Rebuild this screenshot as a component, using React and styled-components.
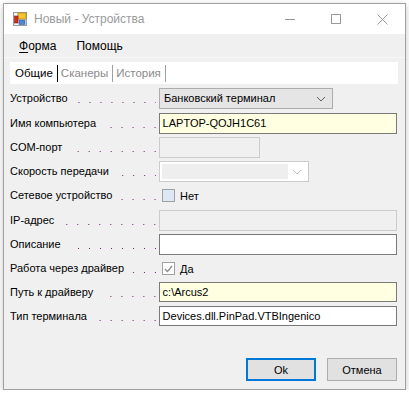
import React from 'react';
import styled, { createGlobalStyle } from 'styled-components';

const GlobalStyle = createGlobalStyle`
  body {
    margin: 0;
    background: #ffffff;
    font-family: "Liberation Sans", Arial, sans-serif;
  }
`;

const Window = styled.div`
  margin: 3px 0 0 3px;
  width: 401px;
  height: 385px;
  border: 1px solid #a0a0a0;
  background: #f0f0f0;
  box-shadow: 0 2px 7px rgba(0, 0, 0, 0.22);
  display: flex;
  flex-direction: column;
`;

const TitleBar = styled.div`
  height: 30px;
  background: #ffffff;
  display: flex;
  align-items: center;
  padding-left: 9px;
`;

const Title = styled.span`
  margin-left: 7px;
  font-size: 12px;
  color: #9a9a9a;
  flex: 1;
`;

const WinButton = styled.div`
  width: 46px;
  height: 30px;
  display: flex;
  align-items: center;
  justify-content: center;
`;

const MenuBar = styled.div`
  height: 23px;
  display: flex;
  align-items: center;
  padding-left: 11px;
  gap: 12px;
  border-bottom: 1px solid #f8f8f8;
`;

const MenuItem = styled.span`
  font-size: 12px;
  color: #000;
  padding: 0 4px;
  u { text-decoration-thickness: 1px; text-underline-offset: 2px; }
`;

const TabStrip = styled.div`
  margin: 4px 7px 0 6px;
  height: 22px;
  background: #ffffff;
  display: flex;
  align-items: center;
  padding-left: 2px;
`;

const Tab = styled.span`
  font-size: 11.5px;
  padding: 0 4px 0 3px;
  line-height: 17px;
  color: ${p => (p.active ? '#000' : '#8a8a8a')};
  border-right: 1px solid ${p => (p.active ? '#000' : '#a0a0a0')};
`;

const Form = styled.div`
  display: flex;
  flex-direction: column;
  padding: 4px 8px 0 6px;
`;

const Row = styled.div`
  display: flex;
  align-items: flex-start;
  height: ${p => p.h || 24}px;
`;

const Label = styled.div`
  width: 149px;
  display: flex;
  align-items: baseline;
  line-height: 21px;
  font-size: 11px;
  color: #000;
`;

const Dots = styled.span`
  flex: 1;
  align-self: stretch;
  margin-left: 8px;
  margin-right: 3px;
  background-image: linear-gradient(to left, #7a1a7a 1px, transparent 1px);
  background-size: 11px 1px;
  background-repeat: repeat-x;
  background-position: right 0 bottom 6px;
`;

const TextBox = styled.div`
  box-sizing: border-box;
  width: ${p => p.w || 239}px;
  height: ${p => p.hgt || 21}px;
  border: 1px solid ${p => (p.disabled ? '#cccccc' : '#7a7a7a')};
  background: ${p => (p.disabled ? '#f0f0f0' : p.yellow ? '#ffffe1' : '#ffffff')};
  font-size: 11px;
  line-height: 19px;
  padding-left: 3px;
  color: #000;
  white-space: nowrap;
`;

const Combo = styled.div`
  box-sizing: border-box;
  width: ${p => p.w}px;
  height: 21px;
  border: 1px solid ${p => (p.disabled ? '#cccccc' : '#adadad')};
  background: ${p => (p.disabled ? '#ffffff' : '#e5e5e5')};
  display: flex;
  align-items: center;
  padding: 2px;
  font-size: 11px;
  color: #000;
`;

const ComboText = styled.div`
  flex: 1;
  align-self: stretch;
  line-height: 15px;
  padding-left: 2px;
  background: ${p => (p.disabled ? '#eeeeee' : 'transparent')};
`;

const Chevron = styled.div`
  width: 18px;
  display: flex;
  justify-content: center;
`;

const CheckRow = styled.div`
  display: flex;
  align-items: center;
  height: 21px;
  padding-left: 3px;
  font-size: 11px;
  gap: 5px;
`;

const CheckBox = styled.div`
  box-sizing: border-box;
  width: 13px;
  height: 13px;
  border: 1px solid #a0a0a0;
  background: ${p => (p.hot ? '#dde8f7' : '#ffffff')};
  display: flex;
  align-items: center;
  justify-content: center;
`;

const Footer = styled.div`
  margin-top: auto;
  display: flex;
  justify-content: flex-end;
  gap: 11px;
  padding: 0 8px 8px 0;
`;

const Button = styled.div`
  box-sizing: border-box;
  width: 70px;
  height: 23px;
  border: ${p => (p.primary ? '2px solid #0078d7' : '1px solid #adadad')};
  background: #e1e1e1;
  display: flex;
  align-items: center;
  justify-content: center;
  font-size: 11px;
  color: #000;
`;

const AppIcon = () => (
  <svg width="14" height="14" viewBox="0 0 14 14">
    <rect x="0.5" y="0.5" width="13" height="13" fill="#f4f4f4" stroke="#9a9a9a" />
    <rect x="5" y="1" width="8" height="6" fill="#f2c531" stroke="#b98a10" strokeWidth="0.8" />
    <rect x="1.5" y="4" width="3.5" height="7" fill="#d42a1c" stroke="#8c1a10" strokeWidth="0.6" />
    <rect x="6" y="8" width="6" height="4.5" fill="#4f86d6" stroke="#2a5ea8" strokeWidth="0.6" />
  </svg>
);

const Dropdown = ({ color }) => (
  <svg width="10" height="6" viewBox="0 0 10 6">
    <polyline points="1,1 5,5 9,1" fill="none" stroke={color} strokeWidth="1" />
  </svg>
);

function Field({ label, h, children }) {
  return (
    <Row h={h}>
      <Label>
        {label}
        <Dots />
      </Label>
      {children}
    </Row>
  );
}

export default function App() {
  return (
    <>
      <GlobalStyle />
      <Window>
        <TitleBar>
          <AppIcon />
          <Title>Новый - Устройства</Title>
          <WinButton>
            <svg width="10" height="10" viewBox="0 0 10 10">
              <line x1="0" y1="5.5" x2="10" y2="5.5" stroke="#9a9a9a" strokeWidth="1" />
            </svg>
          </WinButton>
          <WinButton>
            <svg width="10" height="10" viewBox="0 0 10 10">
              <rect x="0.5" y="0.5" width="9" height="9" fill="none" stroke="#9a9a9a" strokeWidth="1" />
            </svg>
          </WinButton>
          <WinButton>
            <svg width="11" height="11" viewBox="0 0 11 11">
              <path d="M0.5 0.5 L10.5 10.5 M10.5 0.5 L0.5 10.5" stroke="#9a9a9a" strokeWidth="1" />
            </svg>
          </WinButton>
        </TitleBar>
        <MenuBar>
          <MenuItem><u>Ф</u>орма</MenuItem>
          <MenuItem>Помощь</MenuItem>
        </MenuBar>
        <TabStrip>
          <Tab active>Общие</Tab>
          <Tab>Сканеры</Tab>
          <Tab>История</Tab>
        </TabStrip>
        <Form>
          <Field label="Устройство" h={25}>
            <Combo w={174}>
              <ComboText>Банковский терминал</ComboText>
              <Chevron><Dropdown color="#606060" /></Chevron>
            </Combo>
          </Field>
          <Field label="Имя компьютера">
            <TextBox yellow>LAPTOP-QOJH1C61</TextBox>
          </Field>
          <Field label="COM-порт">
            <TextBox w={101} disabled />
          </Field>
          <Field label="Скорость передачи">
            <Combo w={150} disabled>
              <ComboText disabled />
              <Chevron><Dropdown color="#c0c0c0" /></Chevron>
            </Combo>
          </Field>
          <Field label="Сетевое устройство" h={25}>
            <CheckRow>
              <CheckBox hot />
              <span>Нет</span>
            </CheckRow>
          </Field>
          <Field label="IP-адрес">
            <TextBox disabled />
          </Field>
          <Field label="Описание">
            <TextBox />
          </Field>
          <Field label="Работа через драйвер">
            <CheckRow>
              <CheckBox>
                <svg width="9" height="8" viewBox="0 0 9 8">
                  <polyline points="1,4 3.5,6.5 8,1" fill="none" stroke="#8a8a8a" strokeWidth="1.3" />
                </svg>
              </CheckBox>
              <span>Да</span>
            </CheckRow>
          </Field>
          <Field label="Путь к драйверу">
            <TextBox yellow hgt={20}>c:\Arcus2</TextBox>
          </Field>
          <Field label="Тип терминала">
            <TextBox hgt={20}>Devices.dll.PinPad.VTBIngenico</TextBox>
          </Field>
        </Form>
        <Footer>
          <Button primary>Ok</Button>
          <Button>Отмена</Button>
        </Footer>
      </Window>
    </>
  );
}
